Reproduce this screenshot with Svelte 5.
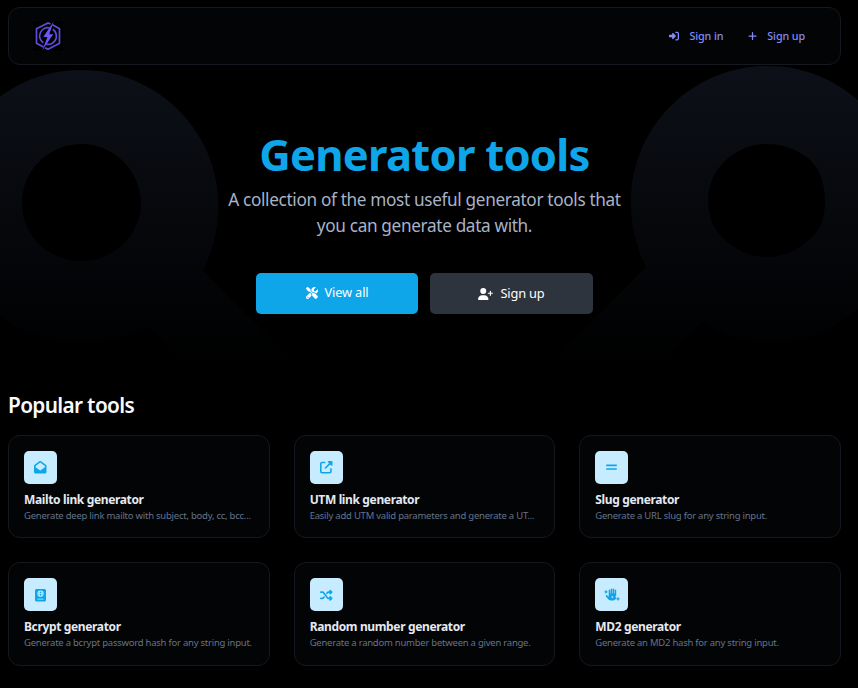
<script>
  const tools = [
    { icon: 'mail', name: 'Mailto link generator', text: 'Generate deep link mailto with subject, body, cc, bcc...' },
    { icon: 'link', name: 'UTM link generator', text: 'Easily add UTM valid parameters and generate a UT...' },
    { icon: 'slug', name: 'Slug generator', text: 'Generate a URL slug for any string input.' },
    { icon: 'passport', name: 'Bcrypt generator', text: 'Generate a bcrypt password hash for any string input.' },
    { icon: 'shuffle', name: 'Random number generator', text: 'Generate a random number between a given range.' },
    { icon: 'hand', name: 'MD2 generator', text: 'Generate an MD2 hash for any string input.' }
  ];
</script>

<div class="page">
  <svg class="backdrop" width="858" height="400" viewBox="0 0 858 400" aria-hidden="true">
    <defs>
      <linearGradient id="fade" gradientUnits="userSpaceOnUse" x1="0" y1="66" x2="0" y2="366">
        <stop offset="0" stop-color="#0d1018" />
        <stop offset="0.5" stop-color="#06080c" />
        <stop offset="1" stop-color="#000000" />
      </linearGradient>
    </defs>
    <g fill="url(#fade)" fill-rule="evenodd">
      <path d="M81.500 70C157 70 218.500 131 218.500 206C218.500 230 212 252 203 271L296 364H184L148 327C128 337 105 343 81.500 343C6 343-55 282-55 206S6 70 81.500 70ZM81.500 144C49 144 22 170 22 203S49 261 81.500 261S141 235 141 203S114 144 81.500 144Z" />
      <path d="M768 66C692 66 631 127 631 202C631 226 636 247 646 267L549 364H661L702 322C722 335 744 343 768 343C844 343 905 281 905 205S844 66 768 66ZM767 144C786 144 798 151 808 158C819 167 825 182 825 201C825 217 821 229 812 237C799 249 785 257 768 257C748 257 735 249 724 239C714 230 708 216 708 201C708 168 736 144 767 144Z" />
    </g>
  </svg>

  <header>
    <svg class="logo" width="30" height="30" viewBox="0 0 30 30" fill="none" stroke="#5f4bdc" stroke-width="1.700">
      <rect width="30" height="30" fill="#000" stroke="none" />
      <path d="M19.500 3.700L26.500 7.800V22.200L15 28.300L12 26.700M10.500 26L3.500 22.200V7.800L15 1.900L17.500 3" />
      <path d="M16.500 6.800A8.300 8.300 0 0 0 10.300 21.800M13.300 23.200A8.300 8.300 0 0 0 19.700 8.200" />
      <path d="M20.700 .5L10.300 16H14.500L9.300 29.300L20.200 13.300H16.200Z" fill="#6b58f6" stroke="none" />
    </svg>
    <nav>
      <a href="#signin">
        <svg width="10" height="10" viewBox="0 0 512 512"><path d="M217.900 105.900L340.700 228.700c7.200 7.200 11.300 17.100 11.300 27.300s-4.100 20.100-11.300 27.300L217.900 406.100c-6.400 6.400-15 9.900-24 9.900c-18.700 0-33.900-15.200-33.900-33.900l0-62.100L32 320c-17.700 0-32-14.300-32-32l0-64c0-17.700 14.300-32 32-32l128 0 0-62.100c0-18.700 15.200-33.900 33.900-33.900c9 0 17.600 3.600 24 9.900zM352 416l64 0c17.700 0 32-14.300 32-32l0-256c0-17.700-14.300-32-32-32l-64 0c-17.700 0-32-14.300-32-32s14.300-32 32-32l64 0c53 0 96 43 96 96l0 256c0 53-43 96-96 96l-64 0c-17.700 0-32-14.300-32-32s14.300-32 32-32z" /></svg>
        <span>Sign in</span>
      </a>
      <a class="up" href="#signup">
        <svg width="9" height="10" viewBox="0 0 448 512"><path d="M256 80c0-17.700-14.300-32-32-32s-32 14.300-32 32l0 144L48 224c-17.700 0-32 14.300-32 32s14.300 32 32 32l144 0 0 144c0 17.700 14.300 32 32 32s32-14.300 32-32l0-144 144 0c17.700 0 32-14.300 32-32s-14.300-32-32-32l-144 0 0-144z" /></svg>
        <span>Sign up</span>
      </a>
    </nav>
  </header>

  <main>
    <section class="hero">
      <h1>Generator tools</h1>
      <p>A collection of the most useful generator tools that<br /><span>you can generate data with.</span></p>
      <div class="actions">
        <a class="btn primary" href="#tools">
          <svg width="12" height="12" viewBox="0 0 512 512"><path d="M78.600 5C69.100-2.400 55.600-1.500 47 7L7 47c-8.500 8.500-9.400 22-2.100 31.600l80 104c4.500 5.900 11.600 9.400 19 9.400h54.100l109 109c-14.700 29-10 65.400 14.300 89.600l112 112c12.500 12.500 32.800 12.500 45.300 0l64-64c12.500-12.500 12.500-32.800 0-45.300l-112-112c-24.200-24.200-60.600-29-89.600-14.300l-109-109V104c0-7.500-3.500-14.500-9.400-19L78.600 5zM19.900 396.100C7.200 408.800 0 426.100 0 444.100C0 481.600 30.400 512 67.900 512c18 0 35.300-7.200 48-19.900L233.700 374.300c-7.800-20.900-9-43.600-3.600-65.100l-61.700-61.700L19.900 396.100zM512 144c0-10.500-1.100-20.700-3.200-30.500c-2.400-11.200-16.100-14.100-24.200-6l-63.900 63.900c-3 3-7.100 4.700-11.300 4.700H352c-8.800 0-16-7.200-16-16V102.600c0-4.200 1.700-8.300 4.700-11.300l63.900-63.900c8.100-8.100 5.200-21.800-6-24.200C388.700 1.100 378.500 0 368 0C288.500 0 224 64.500 224 144l0 .8 85.300 85.300c36-9.100 75.800 .5 104 28.700L429 274.500c49-23 83-72.800 83-130.500zM56 432a24 24 0 1 1 48 0 24 24 0 1 1 -48 0z" /></svg>
          <span>View all</span>
        </a>
        <a class="btn dark" href="#signup">
          <svg width="15" height="12" viewBox="0 0 640 512"><path d="M96 128a128 128 0 1 1 256 0A128 128 0 1 1 96 128zM0 482.300C0 383.800 79.800 304 178.300 304h91.400C368.200 304 448 383.800 448 482.300c0 16.400-13.300 29.700-29.700 29.700H29.700C13.300 512 0 498.700 0 482.300zM504 312V248H440c-13.300 0-24-10.700-24-24s10.700-24 24-24h64V136c0-13.300 10.700-24 24-24s24 10.700 24 24v64h64c13.300 0 24 10.700 24 24s-10.700 24-24 24H552v64c0 13.300-10.700 24-24 24s-24-10.700-24-24z" /></svg>
          <span>Sign up</span>
        </a>
      </div>
    </section>

    <h2>Popular tools</h2>
    <section class="grid">
      {#each tools as tool}
        <article class="card">
          <div class="tile">
            {#if tool.icon === 'mail'}
              <svg width="12.500" height="12.500" viewBox="0 0 512 512"><path d="M64 208.100L256 65.900 448 208.100v47.400L289.500 373c-9.700 7.200-21.400 11-33.500 11s-23.800-3.900-33.500-11L64 255.500V208.100zM256 0c-12.100 0-23.800 3.900-33.500 11L25.900 156.700C9.600 168.800 0 187.800 0 208.100V448c0 35.300 28.700 64 64 64H448c35.300 0 64-28.700 64-64V208.100c0-20.300-9.600-39.400-25.900-51.400L289.500 11C279.800 3.900 268.100 0 256 0z" /></svg>
            {:else if tool.icon === 'link'}
              <svg width="12.500" height="12.500" viewBox="0 0 512 512"><path d="M352 0c-12.900 0-24.600 7.800-29.600 19.800s-2.200 25.700 6.900 34.900L370.700 96 201.400 265.400c-12.500 12.500-12.500 32.800 0 45.300s32.800 12.500 45.300 0L416 141.300l41.400 41.400c9.200 9.200 22.900 11.900 34.900 6.900s19.800-16.600 19.800-29.600V32c0-17.700-14.300-32-32-32H352zM80 32C35.800 32 0 67.800 0 112V432c0 44.200 35.800 80 80 80H400c44.200 0 80-35.800 80-80V320c0-17.700-14.300-32-32-32s-32 14.300-32 32V432c0 8.800-7.200 16-16 16H80c-8.800 0-16-7.200-16-16V112c0-8.800 7.200-16 16-16H192c17.700 0 32-14.300 32-32s-14.300-32-32-32H80z" /></svg>
            {:else if tool.icon === 'slug'}
              <svg width="11" height="13" viewBox="0 0 11 13"><rect y="3.600" width="11" height="1.600" rx=".8" /><rect y="7.200" width="11" height="1.600" rx=".8" /></svg>
            {:else if tool.icon === 'passport'}
              <svg width="11" height="12.500" viewBox="0 0 448 512"><path fill-rule="evenodd" d="M64 0C29 0 0 29 0 64V448c0 35 29 64 64 64H384c35 0 64-29 64-64V64c0-35-29-64-64-64H64ZM112 400H336c9 0 16 7 16 16s-7 16-16 16H112c-9 0-16-7-16-16s7-16 16-16ZM224 64a128 128 0 1 1 0 256a128 128 0 1 1 0-256ZM168 176c2-32 9-54 19-68c-26 14-46 38-51 68ZM136 208c5 30 25 54 51 68c-10-14-17-36-19-68ZM224 96c-10 0-23 34-25 80h50c-2-46-15-80-25-80ZM199 208c2 46 15 80 25 80s23-34 25-80ZM280 176h32c-5-30-25-54-51-68c10 14 17 36 19 68ZM280 208c-2 32-9 54-19 68c26-14 46-38 51-68Z" /></svg>
            {:else if tool.icon === 'shuffle'}
              <svg width="12.500" height="12.500" viewBox="0 0 512 512"><path d="M403.800 34.400c12-5 25.700-2.200 34.900 6.900l64 64c6 6 9.400 14.100 9.400 22.600s-3.400 16.600-9.400 22.600l-64 64c-9.200 9.200-22.900 11.900-34.900 6.900s-19.800-16.600-19.800-29.600V160H352c-10.100 0-19.600 4.700-25.600 12.800L284 229.300 244 176l31.200-41.600C293.300 110.200 321.800 96 352 96h32V64c0-12.900 7.800-24.600 19.800-29.600zM164 282.700L204 336l-31.200 41.600C154.700 401.800 126.200 416 96 416H32c-17.700 0-32-14.300-32-32s14.300-32 32-32H96c10.100 0 19.600-4.700 25.600-12.800L164 282.700zm274.600 188c-9.200 9.200-22.900 11.900-34.900 6.900s-19.800-16.600-19.800-29.600V416H352c-30.200 0-58.700-14.200-76.800-38.400L121.600 172.800c-6-8.100-15.500-12.800-25.600-12.800H32c-17.700 0-32-14.300-32-32s14.300-32 32-32H96c30.200 0 58.700 14.200 76.800 38.400L326.400 339.200c6 8.100 15.500 12.800 25.600 12.800h32V320c0-12.900 7.800-24.600 19.800-29.600s25.700-2.200 34.900 6.900l64 64c6 6 9.400 14.100 9.400 22.600s-3.400 16.600-9.400 22.600l-64 64z" /></svg>
            {:else}
              <svg width="16" height="13" viewBox="0 0 16 13"><path d="M4.700 2.300c0-1 1.500-1 1.500 0V5.500h.5V1.200c0-1 1.500-1 1.500 0V5.500h.5V1.200c0-1 1.500-1 1.500 0V5.500h.5V2.300c0-1 1.500-1 1.500 0V7.800l-1.100 1.100 1.400.8c-.8 1.800-2.300 2.900-4.400 2.900C5.700 12.600 4.600 11.800 3.600 10.400L1.800 8.200c-.6-.9.6-1.800 1.300-1l1.600 1.500ZM2 1.600l.7 1.600 1.600.7-1.600.7L2 6.200l-.7-1.600L-.2 3.900l1.500-.7ZM14 8.600l.7 1.600 1.600.7-1.600.7-.7 1.600-.7-1.600-1.600-.7 1.600-.7Z" /><path d="M8.300 7.600l.4 1 .9.400-.9.400-.4 1-.4-1-.9-.4.900-.4Z" fill="#c7ecff" /></svg>
            {/if}
          </div>
          <h3>{tool.name}</h3>
          <p>{tool.text}</p>
        </article>
      {/each}
    </section>
  </main>
</div>

<style>
  :global(body) {
    background: #000;
  }
  .page {
    position: relative;
    box-sizing: border-box;
    width: 858px;
    height: 688px;
    overflow: hidden;
    padding: 7px 17px 0 8px;
    background: #000;
    font-family: 'Noto Sans', 'Open Sans', sans-serif;
  }
  .backdrop {
    position: absolute;
    left: 0;
    top: 0;
  }
  header,
  main {
    position: relative;
  }
  header {
    box-sizing: border-box;
    height: 58px;
    border: 1px solid #15181e;
    border-radius: 12px;
    background: #030406;
    display: flex;
    align-items: center;
    justify-content: space-between;
    padding: 0 35px 0 24px;
  }
  .logo {
    display: block;
  }
  nav {
    display: flex;
    gap: 25px;
  }
  a {
    text-decoration: none;
    display: flex;
    align-items: center;
    white-space: nowrap;
  }
  nav a {
    color: #818cf8;
    fill: #818cf8;
    font-size: 10.800px;
    font-weight: 500;
    line-height: 16px;
    gap: 10px;
    letter-spacing: -0.13px;
  }
  .hero {
    height: 322px;
    display: flex;
    flex-direction: column;
    align-items: center;
  }
  h1,
  h2,
  h3,
  p {
    margin: 0;
    white-space: nowrap;
  }
  h1 {
    margin-top: 59px;
    color: #0ea5e9;
    font-size: 43.500px;
    line-height: 60px;
    font-weight: 700;
    letter-spacing: -0.72px;
  }
  .hero p {
    margin-top: 3px;
    color: #a8b3c7;
    font-size: 17.200px;
    line-height: 26px;
    text-align: center;
    letter-spacing: -0.34px;
  }
  .actions {
    display: flex;
    gap: 12px;
    margin-top: 34px;
  }
  .btn {
    box-sizing: border-box;
    width: 162px;
    height: 41px;
    border-radius: 5px;
    justify-content: center;
    gap: 7px;
    color: #fff;
    fill: #fff;
    font-size: 12.800px;
    letter-spacing: -0.15px;
  }
  .btn span {
    padding-bottom: 2px;
  }
  .primary {
    background: #0ea5e9;
    padding-bottom: 2px;
  }
  .dark {
    width: 163px;
    background: #2e343e;
  }
  h2 {
    color: #f8fafc;
    font-size: 20.800px;
    line-height: 28px;
    font-weight: 600;
    letter-spacing: -0.66px;
    margin: 4px 0 16px;
  }
  .grid {
    display: grid;
    grid-template-columns: repeat(3, 1fr);
    gap: 24px;
  }
  .card {
    box-sizing: border-box;
    height: 103.400px;
    min-width: 0;
    border: 1px solid #15181e;
    border-radius: 12px;
    background: #030406;
    padding: 15px;
  }
  .tile {
    width: 33px;
    height: 33px;
    border-radius: 5px;
    background: #c7ecff;
    fill: #0ea5e9;
    display: flex;
    align-items: center;
    justify-content: center;
  }
  .tile svg {
    display: block;
    overflow: visible;
  }
  h3 {
    margin-top: 7px;
    color: #e5e9f0;
    font-size: 12px;
    line-height: 17px;
    font-weight: 700;
    letter-spacing: -0.36px;
  }
  .card p {
    color: #64748b;
    font-size: 9.500px;
    line-height: 15px;
    letter-spacing: -0.24px;
  }
</style>
